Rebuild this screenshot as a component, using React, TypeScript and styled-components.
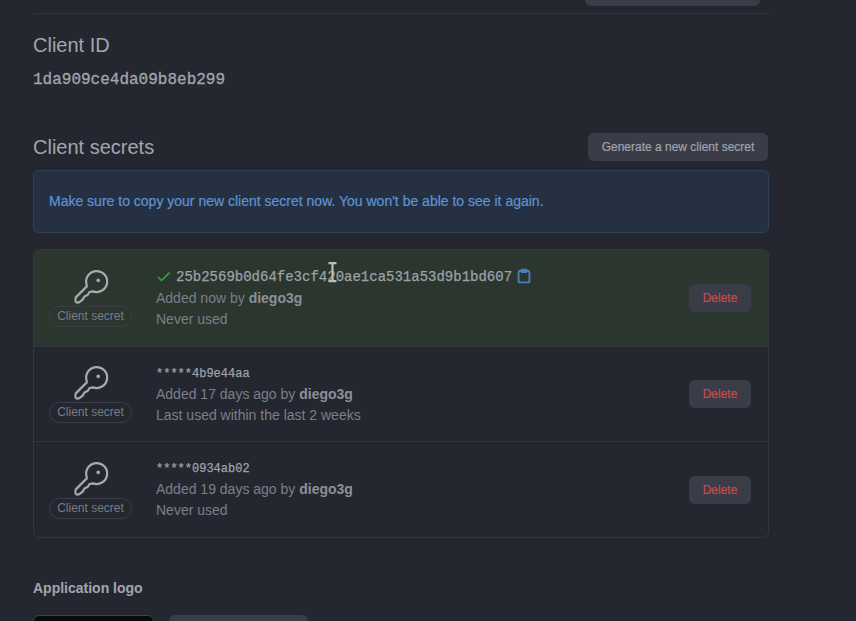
import React from "react";
import styled, { createGlobalStyle, css } from "styled-components";

const GlobalStyle = createGlobalStyle`
  * { box-sizing: border-box; }
  body {
    margin: 0;
    background: #252730;
    font-family: "Liberation Sans", Arial, sans-serif;
    overflow: hidden;
  }
`;

const Page = styled.main`
  width: 856px;
  height: 621px;
  overflow: hidden;
  padding-left: 33px;
  background: #252730;
  color: #a2a5ae;
`;

const Content = styled.div`
  width: 736px;
  display: flex;
  flex-direction: column;
`;

const TopStrip = styled.div`
  height: 14px;
  border-bottom: 1px solid #31343d;
  display: flex;
  justify-content: flex-end;
  align-items: flex-start;
  padding-right: 9px;
`;

const ButtonEdge = styled.div<{ $width: number; $end?: boolean }>`
  width: ${(p) => p.$width}px;
  height: 6px;
  background: #3a3d47;
  border-radius: ${(p) => (p.$end ? "0 0 6px 6px" : "6px 6px 0 0")};
`;

const Heading = styled.h2`
  margin: 0;
  font-size: 20px;
  line-height: 28px;
  font-weight: 400;
`;

const ClientId = styled.code`
  margin-top: 11px;
  font: 16px/20px "Liberation Mono", monospace;
  -webkit-text-stroke: 0.3px currentColor;
`;

const ClientBlock = styled.section`
  display: flex;
  flex-direction: column;
  padding-top: 17px;
`;

const SecretsHeader = styled.header`
  display: flex;
  justify-content: space-between;
  align-items: center;
  height: 28px;
  margin-top: 43px;
  padding-right: 1px;
`;

const Button = styled.button<{ $danger?: boolean }>`
  height: 28px;
  width: ${(p) => (p.$danger ? 62 : 180)}px;
  padding: 0;
  flex: none;
  border: 0;
  border-radius: 6px;
  background: #3a3d48;
  color: ${(p) => (p.$danger ? "#c44d50" : "#a0a3ad")};
  font: 12px/28px "Liberation Sans", Arial, sans-serif;
  -webkit-text-stroke: 0.2px currentColor;
`;

const Notice = styled.div`
  height: 63px;
  margin-top: 9px;
  padding: 0 15px 2px;
  display: flex;
  align-items: center;
  border: 1px solid #2f3f55;
  border-radius: 6px;
  background: #253142;
  color: #5d93d6;
  font-size: 14px;
  -webkit-text-stroke: 0.2px currentColor;
`;

const SecretList = styled.ul`
  list-style: none;
  margin: 16px 0 0;
  padding: 0;
  border: 1px solid #343741;
  border-radius: 6px;
  overflow: hidden;
`;

const SecretRow = styled.li<{ $fresh?: boolean }>`
  height: ${(p) => (p.$fresh ? 96 : 95)}px;
  display: flex;
  align-items: center;
  padding: 0 17px 0 15px;
  background: ${(p) => (p.$fresh ? "#2b362f" : "transparent")};
  & + & { border-top: 1px solid #32353e; }
  &:last-child { height: 96px; }
`;

const KeyColumn = styled.div`
  width: 83px;
  display: flex;
  flex-direction: column;
  align-items: center;
  color: #a8abb3;
`;

const Tag = styled.span`
  width: 83px;
  height: 21px;
  margin-top: 1px;
  border: 1px solid #3b3e48;
  border-radius: 11px;
  color: #797c86;
  font-size: 12px;
  line-height: 19px;
  text-align: center;
`;

const Details = styled.div`
  flex: 1;
  margin-left: 24px;
  font-size: 14px;
  line-height: 21px;
  color: #7b7f88;
`;

const CodeLine = styled.div<{ $full?: boolean }>`
  display: flex;
  align-items: center;
  height: 21px;
  ${(p) =>
    p.$full
      ? css`
          > svg:first-child { margin-right: 5px; }
          > svg:last-child { margin: 0 0 2px 5px; }
        `
      : css`
          padding-top: 2px;
        `}
`;

const Code = styled.code<{ $full?: boolean }>`
  position: relative;
  color: #9da2a7;
  font: ${(p) => (p.$full ? 14 : 12)}px/21px "Liberation Mono", monospace;
  -webkit-text-stroke: 0.25px currentColor;
`;

const TextCursor = styled.svg`
  position: absolute;
  left: 152px;
  top: -5px;
`;

const User = styled.strong`
  color: #8c9098;
`;

const LogoHeading = styled.h3`
  margin: 41px 0 0;
  font-size: 14px;
  line-height: 18px;
`;

const LogoRow = styled.div`
  display: flex;
  gap: 15px;
  margin-top: 18px;
`;

const LogoPreview = styled.div`
  width: 121px;
  height: 20px;
  border: 1px solid #3f414b;
  border-radius: 6px 6px 0 0;
  background: #0b090e;
`;

const KeyIcon = () => (
  <svg width="36" height="36" viewBox="0 0 36 36" fill="none" stroke="currentColor" strokeWidth="2.2" strokeLinejoin="round">
    <path d="M13.6 15.6A10.5 10.5 0 1 1 20 22.4L16.5 23L14.6 26L11.8 27.2L9.6 30.6L6.6 33Q3.6 34.4 2.6 32.4Q2 30.6 2.8 28.4L13.8 17.4Z" />
    <circle cx="25.2" cy="11.4" r="1.8" fill="currentColor" stroke="none" />
  </svg>
);

const CheckIcon = () => (
  <svg width="15" height="14" viewBox="0 0 15 14" fill="none" stroke="#3f9d47" strokeWidth="1.7" strokeLinecap="round" strokeLinejoin="round">
    <path d="M2.5 7.5L5.5 10.5L13 3.2" />
  </svg>
);

const ClipboardIcon = () => (
  <svg width="14" height="16" viewBox="0 0 15 17" fill="none" stroke="#4680bd" strokeWidth="2" strokeLinejoin="round">
    <path d="M4.5 3.2H3Q1.7 3.2 1.7 4.5V14Q1.7 15.4 3 15.4H12Q13.3 15.4 13.3 14V4.5Q13.3 3.2 12 3.2H10.5" />
    <path d="M5 1.7H10V4.2H5Z" fill="#4680bd" />
  </svg>
);

const Cursor = () => (
  <TextCursor width="9" height="21" viewBox="0 0 9 21" fill="none" stroke="#b9beba" strokeWidth="2.2">
    <path d="M.5 1.2H8.5M4.5 1.2V19.2M.5 19.2H8.5" />
  </TextCursor>
);

interface Secret {
  code: string;
  added: string;
  usage: string;
  fresh?: boolean;
}

const secrets: Secret[] = [
  { code: "25b2569b0d64fe3cf420ae1ca531a53d9b1bd607", added: "Added now by", usage: "Never used", fresh: true },
  { code: "*****4b9e44aa", added: "Added 17 days ago by", usage: "Last used within the last 2 weeks" },
  { code: "*****0934ab02", added: "Added 19 days ago by", usage: "Never used" },
];

export default function App() {
  return (
    <>
      <GlobalStyle />
      <Page>
        <Content>
          <TopStrip>
            <ButtonEdge $width={175} $end />
          </TopStrip>
          <ClientBlock>
            <Heading>Client ID</Heading>
            <ClientId>1da909ce4da09b8eb299</ClientId>
          </ClientBlock>
          <SecretsHeader>
            <Heading>Client secrets</Heading>
            <Button>Generate a new client secret</Button>
          </SecretsHeader>
          <Notice>Make sure to copy your new client secret now. You won't be able to see it again.</Notice>
          <SecretList>
            {secrets.map((s) => (
              <SecretRow key={s.code} $fresh={s.fresh}>
                <KeyColumn>
                  <KeyIcon />
                  <Tag>Client secret</Tag>
                </KeyColumn>
                <Details>
                  <CodeLine $full={s.fresh}>
                    {s.fresh && <CheckIcon />}
                    <Code $full={s.fresh}>
                      {s.code}
                      {s.fresh && <Cursor />}
                    </Code>
                    {s.fresh && <ClipboardIcon />}
                  </CodeLine>
                  <div>
                    {s.added} <User>diego3g</User>
                  </div>
                  <div>{s.usage}</div>
                </Details>
                <Button $danger>Delete</Button>
              </SecretRow>
            ))}
          </SecretList>
          <LogoHeading>Application logo</LogoHeading>
          <LogoRow>
            <LogoPreview />
            <ButtonEdge $width={139} />
          </LogoRow>
        </Content>
      </Page>
    </>
  );
}
